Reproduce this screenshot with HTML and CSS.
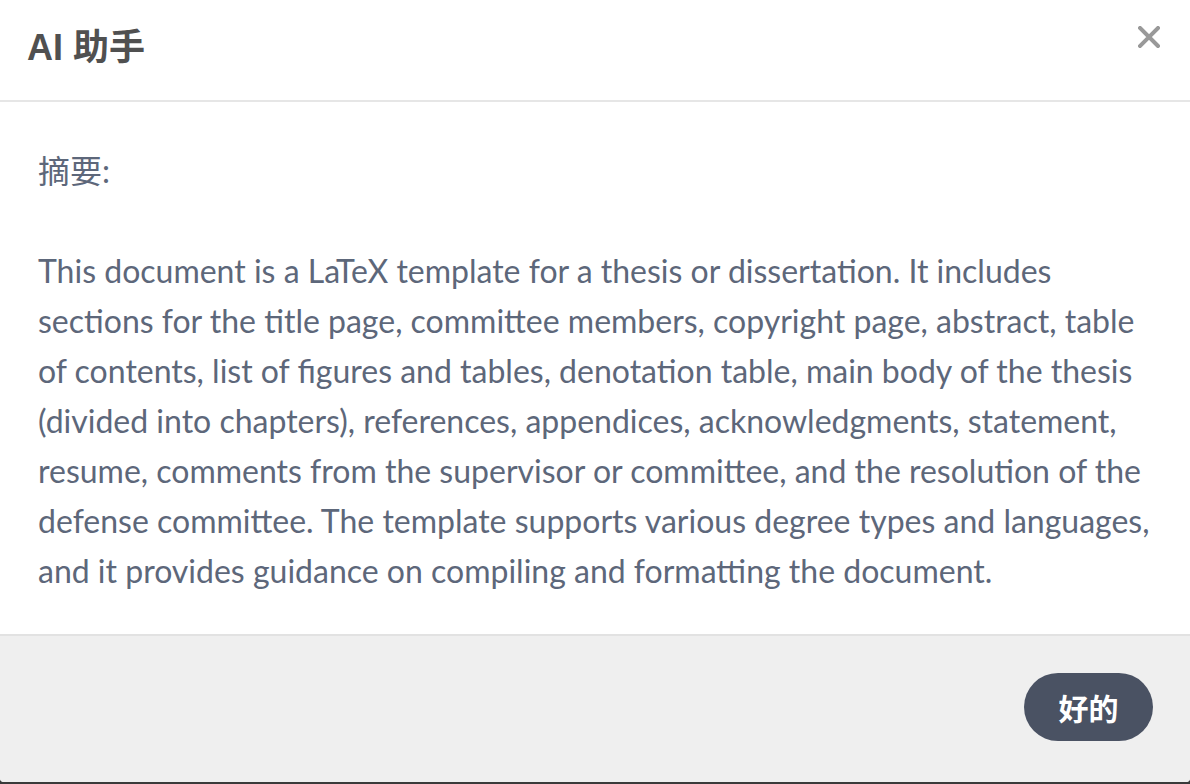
FILE: index.html
```html
<!DOCTYPE html>
<html lang="zh">
<head>
<meta charset="utf-8">
<title>AI 助手</title>
<link rel="stylesheet" href="styles.css">
</head>
<body>
<div class="modal">
  <div class="modal-header">
    <h2 class="modal-title">AI 助手</h2>
    <button class="close-btn" aria-label="关闭">
      <svg width="22" height="22" viewBox="0 0 22 22"><path d="M2 2 L20 20 M20 2 L2 20" stroke="#999" stroke-width="4" stroke-linecap="square" fill="none"/></svg>
    </button>
  </div>
  <div class="modal-body">
    <p class="summary">摘要:

This document is a LaTeX template for a thesis or dissertation. It includes sections for the title page, committee members, copyright page, abstract, table of contents, list of figures and tables, denotation table, main body of the thesis (divided into chapters), references, appendices, acknowledgments, statement, resume, comments from the supervisor or committee, and the resolution of the defense committee. The template supports various degree types and languages, and it provides guidance on compiling and formatting the document.</p>
  </div>
  <div class="modal-footer">
    <button class="ok-btn">好的</button>
  </div>
</div>
</body>
</html>
```

FILE: styles.css
```css
html, body {
  margin: 0;
  padding: 0;
}
body {
  background: #3a3a3a;
  height: 784px;
  overflow: hidden;
}
.modal {
  width: 1190px;
  height: 782px;
  background: #ffffff;
  display: flex;
  flex-direction: column;
  border-radius: 0 0 4px 4px;
  overflow: hidden;
}
.modal-header {
  height: 102px;
  border-bottom: 2px solid #e6e6e6;
  display: flex;
  align-items: center;
  justify-content: space-between;
  padding: 0 30px 0 27px;
  box-sizing: border-box;
  flex: none;
}
.modal-title {
  margin: 0;
  font-family: "Liberation Sans", "Noto Sans CJK SC", sans-serif;
  font-weight: bold;
  font-size: 36px;
  color: #505050;
  padding-bottom: 12px;
}
.close-btn {
  border: none;
  background: none;
  padding: 0;
  margin-bottom: 26px;
  width: 22px;
  height: 22px;
  display: flex;
}
.modal-body {
  flex: 1;
  padding: 44px 38px 0 38px;
}
.summary {
  margin: 0;
  white-space: pre-wrap;
  font-family: Lato, "Noto Sans CJK SC", sans-serif;
  font-size: 32px;
  line-height: 50px;
  color: #5d677a;
}
.modal-footer {
  flex: none;
  height: 148px;
  box-sizing: border-box;
  background: #efefef;
  border-top: 2px solid #e2e2e2;
  display: flex;
  justify-content: flex-end;
  align-items: flex-start;
  padding: 37px 37px 0 0;
}
.ok-btn {
  width: 129px;
  height: 68px;
  border: none;
  border-radius: 34px;
  background: #4a5263;
  color: #ffffff;
  font-family: "Noto Sans CJK SC", sans-serif;
  font-size: 30px;
  font-weight: 700;
  padding: 0;
}
```
